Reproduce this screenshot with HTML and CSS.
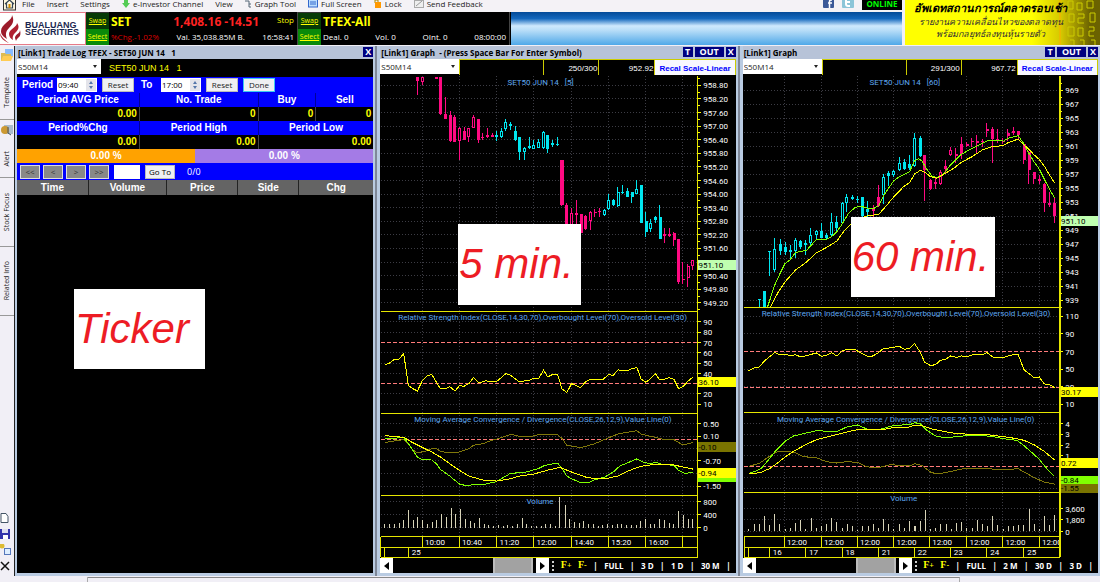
FILE: index.html
```html
<!DOCTYPE html>
<html lang="en">
<head>
    <meta charset="UTF-8">
    <meta name="viewport" content="width=device-width, initial-scale=1.0">
    <title>Bualuang Securities</title>
    <link rel="stylesheet" href="styles.css">
</head>
<body>
    <header class="top">
        <nav class="menu">
            <a href="#" class="home" aria-label="Home"><svg width="13" height="11" viewBox="0 0 13 11"><rect x="0.5" y="-3" width="12" height="13" fill="#fff8e0" stroke="#333"/><path d="M2 4 6.500 0 11 4M3.500 3v5h6V3" fill="none" stroke="#345" stroke-width="1.200"/><rect x="5.500" y="4" width="2" height="4" fill="#c80"/></svg></a>
            <a href="#">File</a>
            <a href="#">Insert</a>
            <a href="#">Settings</a>
            <a href="#"><svg width="8" height="9" viewBox="0 0 8 9"><path d="M2 0h4v3h2L4 8 0 3h2z" fill="#5c5"/></svg>e-Investor Channel</a>
            <a href="#">View</a>
            <a href="#"><svg width="7" height="9" viewBox="0 0 7 9"><path d="M0 1h4v6h2M4 4h2" fill="none" stroke="#567"/></svg>Graph Tool</a>
            <a href="#"><svg width="10" height="9" viewBox="0 0 10 9"><rect x="0.500" y="-2" width="9" height="9" fill="#bdf" stroke="#36c"/><path d="M2 2h6M2 4h6" stroke="#36c"/></svg>Full Screen</a>
            <a href="#"><svg width="8" height="9" viewBox="0 0 8 9"><path d="M1 3V0h3v3" fill="none" stroke="#a80"/><rect x="1" y="2" width="6" height="6" fill="#f90"/></svg>Lock</a>
            <a href="#"><svg width="10" height="9" viewBox="0 0 10 9"><rect x="0.500" y="0.500" width="9" height="7" fill="#eee" stroke="#aaa"/><path d="M2 6 8 1" stroke="#999"/></svg>Send Feedback</a>
            <span class="social">
                <a href="#" aria-label="Facebook"><svg width="11" height="8" viewBox="0 0 11 8"><rect y="-4" width="11" height="12" rx="1" fill="#3b5998"/><path d="M9 0H8Q6.500 0 6.500 1.500V8M5 3h4" fill="none" stroke="#fff" stroke-width="1.500"/></svg></a>
                <a href="#" aria-label="Twitter"><svg width="12" height="8" viewBox="0 0 12 8"><rect y="-4" width="12" height="12" rx="1" fill="#8cc5d8"/><path d="M4 0v4q0 2 2 2h2M4 2h4" fill="none" stroke="#fff" stroke-width="2"/></svg></a>
                <b class="online">ONLINE</b>
            </span>
        </nav>
        <div class="ticker">
            <div class="logo">
                <svg width="23" height="28" viewBox="0 0 23 28"><path d="M12 0C13 5 1 9 1 16c0 4 3 6 6 8-2-5-1-8 2-11C12 10 15 6 12 0z" fill="#9c1b2b"/><path d="M17 8c0 4-8 6-8 11 0 3 2 5 4 6-1-4 1-6 3-8 2-2 4-5 1-9z" fill="#b02030"/><path d="M20 15c0 4-5 4-5 8l1 3c1-4 6-3 4-11z" fill="#9c1b2b"/><path d="M0 18c0 5 4 8 9 10-4-3-7-5-9-10z" fill="#b02030"/></svg>
                <b>BUALUANG<br>SECURITIES</b>
            </div>
            <div class="switch"><button class="swap">Swap</button><button class="select">Select</button></div>
            <div class="quote">
                <div class="line"><b class="name">SET</b><b class="price">1,408.16 -14.51</b><span class="stop">Stop</span></div>
                <div class="line small"><span class="loss">%Chg.-1.02%</span><span>Val. 35,038.85M B.</span><span>16:58:41</span></div>
            </div>
            <div class="switch"><button class="swap">Swap</button><button class="select">Select</button></div>
            <div class="quote">
                <div class="line"><b class="name">TFEX-All</b></div>
                <div class="line small"><span>Deal. 0</span><span>Vol. 0</span><span>OInt. 0</span><span>08:00:00</span></div>
            </div>
            <div class="sky"></div>
        </div>
        <aside class="ad">
            <svg class="ad-art" width="60" height="45" viewBox="0 0 60 45"><g stroke="#cc0" fill="none"><path d="M28 1v8h5V1zM37 3v7h5V3zM47 1v7h6V1zM29 14v8h5v-8zM38 14h6v4h-6v5h6M50 13v9h5v-9zM28 27h6v9h-6zM38 28v8h5v-8zM49 27h5v4h-5v5h5M30 40h4v6M40 40h4v6M51 40h4v6"/><path d="M20 0v45" stroke="#fa0"/></g></svg>
            <p class="big">อัพเดทสถานการณ์ตลาดรอบเช้า</p>
            <p>รายงานความเคลื่อนไหวของตลาดทุน</p>
            <p>พร้อมกลยุทธ์ลงทุนหุ้นรายตัว</p>
        </aside>
    </header>

    <main class="desk">
        <nav class="side">
            <a href="#" class="tab t1"><svg width="12" height="14" viewBox="0 0 12 14"><path d="M4 1h8v8H4z" fill="#8bf"/><path d="M0 5h4l1 1h5v7H0z" fill="#db5"/><path d="M2 8h10l-2 5H0z" fill="#fc5"/></svg><span>Template</span></a>
            <a href="#" class="tab t2"><svg width="12" height="12" viewBox="0 0 12 12"><rect x="3" y="1" width="9" height="9" fill="#abc"/><circle cx="4" cy="6" r="4" fill="#c93"/><path d="M7 3v6l3 2" stroke="#456" fill="none"/></svg><span>Alert</span></a>
            <a href="#" class="tab t3"><span>Stock Focus</span></a>
            <a href="#" class="tab t4"><span>Related Info</span></a>
            <div class="side-tools">
                <button aria-label="New"><svg width="10" height="10" viewBox="0 0 10 10"><path d="M1 .5h5l2 3v6H1z" fill="#fff" stroke="#456"/></svg></button>
                <button aria-label="Save"><svg width="10" height="10" viewBox="0 0 10 10"><rect width="10" height="10" fill="#33a"/><rect x="2" width="6" height="4" fill="#dde"/><rect x="3" y="6" width="5" height="4" fill="#fff"/></svg></button>
                <button aria-label="Link"><svg width="11" height="11" viewBox="0 0 11 11"><circle cx="2" cy="2" r="2.500" fill="#db3"/><rect x="4.500" y="4.500" width="6" height="6" fill="#def" stroke="#57b"/></svg></button>
                <button aria-label="Delete"><svg width="10" height="10" viewBox="0 0 10 10"><path d="M1 1l8 8M9 1 1 9" stroke="#111" stroke-width="1.500"/></svg></button>
            </div>
        </nav>

        <section class="window log-window">
            <div class="title"><h2>[Link1] Trade Log TFEX - SET50 JUN 14&nbsp;&nbsp; 1</h2><button>X</button></div>
            <div class="symbol-row">
                <label class="combo"><select aria-label="Symbol"><option>S50M14</option></select></label>
                <span class="symbol">SET50 JUN 14&nbsp;&nbsp; 1</span>
            </div>
            <div class="period">
                <label for="from">Period</label>
                <span class="spin"><input id="from" type="text" value="09:40"><i></i></span>
                <button>Reset</button>
                <label for="to" class="to">To</label>
                <span class="spin"><input id="to" type="text" value="17:00"><i></i></span>
                <button>Reset</button>
                <button class="done">Done</button>
            </div>
            <table class="summary">
                <colgroup><col class="c34"><col class="c33"><col class="c16"><col class="c16"></colgroup>
                <tr><th>Period AVG Price</th><th>No. Trade</th><th>Buy</th><th>Sell</th></tr>
                <tr><td>0.00</td><td>0</td><td>0</td><td>0</td></tr>
                <tr><th>Period%Chg</th><th>Period High</th><th colspan="2">Period Low</th></tr>
                <tr><td>0.00</td><td>0.00</td><td colspan="2">0.00</td></tr>
            </table>
            <div class="ratio"><b class="buy">0.00 %</b><b class="sell">0.00 %</b></div>
            <div class="pager">
                <button class="nav">&lt;&lt;</button><button class="nav">&lt;</button><button class="nav">&gt;</button><button class="nav">&gt;&gt;</button>
                <input type="text" aria-label="Page"><button class="goto">Go To</button><span>0/0</span>
            </div>
            <div class="log-area">
                <table class="log">
                    <colgroup><col class="l20"><col class="l22"><col class="l20"><col class="l17"><col class="l21"></colgroup>
                    <tr><th>Time</th><th>Volume</th><th>Price</th><th>Side</th><th>Chg</th></tr>
                </table>
            </div>
            <div class="note note-ticker">Ticker</div>
        </section>

        <section class="window">
            <div class="title"><h2>[Link1] Graph&nbsp; - (Press Space Bar For Enter Symbol)</h2><button>T</button><button class="out">OUT</button><button>X</button></div>
            <div class="graph-row">
                <label class="combo"><select aria-label="Symbol"><option>S50M14</option></select></label>
                <span class="cell"></span><span class="cell">250/300</span><span class="cell">952.92</span><button>Recal Scale-Linear</button>
            </div>
            <svg class="chart" id="chart5" viewBox="6 45 1065 1449"></svg>
            <div class="scroll">
                <button class="arrow" aria-label="Scroll left"><svg width="5" height="8" viewBox="0 0 5 8"><path d="M5 0v8L0 4z"/></svg></button>
                <span class="track"><i></i></span>
                <button class="arrow" aria-label="Scroll right"><svg width="5" height="8" viewBox="0 0 5 8"><path d="M0 0v8l5-4z"/></svg></button>
                <span class="tools"><i class="grip"></i><button class="font">F<small>+</small></button><button class="font">F<small>-</small></button><em>|</em><button>FULL</button><em>|</em><button>3 D</button><em>|</em><button>1 D</button><em>|</em><button>30 M</button><em>|</em></span>
            </div>
            <div class="note note-5">5 min.</div>
        </section>

        <section class="window">
            <div class="title"><h2>[Link1] Graph</h2><button>T</button><button class="out">OUT</button><button>X</button></div>
            <div class="graph-row">
                <label class="combo"><select aria-label="Symbol"><option>S50M14</option></select></label>
                <span class="cell"></span><span class="cell">291/300</span><span class="cell">967.72</span><button>Recal Scale-Linear</button>
            </div>
            <svg class="chart" id="chart60" viewBox="9 45 1065 1449"></svg>
            <div class="scroll">
                <button class="arrow" aria-label="Scroll left"><svg width="5" height="8" viewBox="0 0 5 8"><path d="M5 0v8L0 4z"/></svg></button>
                <span class="track"><i></i></span>
                <button class="arrow" aria-label="Scroll right"><svg width="5" height="8" viewBox="0 0 5 8"><path d="M0 0v8l5-4z"/></svg></button>
                <span class="tools"><i class="grip"></i><button class="font">F<small>+</small></button><button class="font">F<small>-</small></button><em>|</em><button>FULL</button><em>|</em><button>2 M</button><em>|</em><button>30 D</button><em>|</em><button>3 D</button><em>|</em></span>
            </div>
            <div class="note note-60">60 min.</div>
        </section>
    </main>
    <footer class="status"><span></span><span class="wide"></span></footer>
    <script src="charts.js"></script>
</body>
</html>
```
FILE: styles.css
```css
* {
    box-sizing: border-box;
}
body {
    margin: 0;
    background: #f1eff6;
    font-family: "Open Sans", "Noto Sans", sans-serif;
    font-size: 9px;
    line-height: 12px;
    min-height: 100vh;
    display: flex;
    flex-direction: column;
    overflow: hidden;
}
button, input, select {
    font: inherit;
    margin: 0;
    padding: 0;
    border: 0;
    border-radius: 0;
}
a {
    color: #222;
    text-decoration: none;
}
svg {
    display: block;
}
i, em {
    font-style: normal;
}

/* header */
.top {
    display: grid;
    grid-template-columns: 1fr 195px;
    grid-template-rows: 12px 34px;
    column-gap: 3px;
}
.menu {
    display: flex;
    align-items: flex-start;
    height: 12px;
    background: #f4f2f6;
    padding-left: 3px;
}
.menu a {
    display: flex;
    gap: 3px;
    margin-right: 12px;
    font-size: 8px;
    line-height: 7px;
    white-space: nowrap;
}
.menu .home {
    margin-right: 6px;
}
.menu .social {
    display: flex;
    margin-left: auto;
}
.menu .social a {
    margin-right: 8px;
}
.online {
    width: 40px;
    height: 10px;
    line-height: 8px;
    font-size: 8px;
    background: #000;
    color: #0f0;
    text-align: center;
}
.ticker {
    display: flex;
    height: 33px;
    background: #000;
}
.logo {
    display: flex;
    align-items: center;
    gap: 2px;
    width: 86px;
    background: #fff;
    border: 1px solid #e67a88;
    border-left: 0;
    color: #1b2750;
    font-family: "Liberation Sans", Arial, sans-serif;
    font-size: 9px;
    line-height: 7px;
}
.switch {
    width: 23px;
    display: flex;
    flex-direction: column;
    border-top: 1px solid #333;
}
.switch button {
    flex: 1;
    color: #ff0;
    font-size: 7px;
    line-height: 8px;
    text-decoration: underline;
}
.swap {
    background: #063a06;
}
.select {
    background: #0a8a0a;
}
.quote {
    width: 189px;
    padding: 2px 3px 0 2px;
    border-right: 1px solid #444;
    color: #fff;
}
.line {
    display: flex;
    align-items: center;
    justify-content: space-between;
    height: 15px;
    white-space: nowrap;
}
.small {
    font-size: 8px;
    height: 16px;
}
.name {
    color: #ff0;
    font-size: 12px;
}
.price {
    color: #f22;
    font-size: 12px;
    margin-left: 24px;
}
.stop {
    color: #ff0;
    font-size: 8px;
    align-self: flex-start;
}
.loss {
    color: #d00;
}
.sky {
    flex: 1;
    margin-left: 1px;
    background: linear-gradient(#034a98, #1468bd 20%, #cfe9fd 42%, #b9def8 55%, #4fa8e8);
}
.ad {
    position: relative;
    grid-column: 2;
    grid-row: 1 / 3;
    background: linear-gradient(90deg, #ff0 65%, #d5c800 80%, #6b6200 95%);
    height: 45px;
    text-align: center;
    padding-right: 24px;
    font-style: italic;
    color: #333;
}
.ad p {
    position: relative;
    margin: 0;
    font-size: 9px;
    line-height: 12px;
    white-space: nowrap;
}
.ad .big {
    font-weight: bold;
    font-size: 11px;
    line-height: 16px;
    color: #000;
}
.ad-art {
    position: absolute;
    right: 0;
    top: 0;
}

/* workspace */
.desk {
    flex: 1;
    display: grid;
    grid-template-columns: 13px repeat(3, minmax(0, 1fr));
    column-gap: 2px;
    background: #7e8798;
}
.side {
    display: flex;
    flex-direction: column;
    background: #f1eff6;
    border-right: 1px solid #222;
    margin-right: -2px;
}
.tab {
    display: flex;
    flex-direction: column;
    align-items: center;
    gap: 4px;
    border-bottom: 1px solid #999;
    font-size: 7px;
    line-height: 10px;
}
.tab span {
    writing-mode: vertical-rl;
    transform: rotate(180deg);
    margin: auto 0;
    white-space: nowrap;
}
.t1 {
    height: 74px;
    padding-top: 2px;
}
.t2 {
    height: 58px;
    padding-top: 4px;
}
.t3, .t4 {
    height: 69px;
}
.side-tools {
    margin-top: auto;
    padding-bottom: 5px;
    display: flex;
    flex-direction: column;
    gap: 5px;
}
.side-tools button {
    background: none;
    height: 11px;
}
.window {
    position: relative;
    padding: 0 2px 3px 3px;
    background: #b9cbe2;
    min-width: 0;
    display: flex;
    flex-direction: column;
}
.log-window {
    padding-left: 2px;
}
.title {
    display: flex;
    gap: 2px;
    height: 13px;
    padding-top: 1px;
    background: #b7c3d8;
}
.title h2 {
    flex: 1;
    margin: 0;
    padding-left: 1px;
    font-size: 8px;
    line-height: 11px;
    color: #000;
    white-space: nowrap;
}
.title button {
    width: 10px;
    height: 10px;
    background: #000080;
    color: #fff;
    font-weight: bold;
    line-height: 10px;
}
.title .out {
    width: 29px;
}
.combo {
    position: relative;
    width: 84px;
    height: 15px;
    background: #fff;
}
.combo select {
    appearance: none;
    width: 100%;
    height: 15px;
    background: #fff;
    padding-left: 1px;
    color: #222;
    font-size: 8px;
}
.combo::after {
    content: "";
    position: absolute;
    right: 4px;
    top: 6px;
    border: 2px solid transparent;
    border-top: 3px solid #222;
    border-bottom: 0;
}

/* trade log */
.symbol-row {
    display: flex;
    height: 18px;
    background: #000;
}
.symbol {
    margin-left: 8px;
    color: #ff0;
    font: 9px/18px "Liberation Sans", Arial, sans-serif;
}
.period {
    display: flex;
    align-items: center;
    height: 16px;
    padding-left: 5px;
    background: #00f;
    color: #fff;
}
.period label {
    font: bold 10px/14px "Liberation Sans", Arial, sans-serif;
    width: 35px;
}
.period .to {
    width: 20px;
    margin-left: 7px;
}
.period button {
    width: 32px;
    height: 14px;
    margin-left: 5px;
    background: #efeff2;
    border: 1px solid #bbb;
    font-size: 8px;
    line-height: 10px;
    color: #222;
}
.period .done {
    border-color: #3cc8f0;
}
.spin {
    display: flex;
    width: 40px;
    height: 14px;
    background: #fff;
}
.spin input {
    width: 28px;
    font-size: 8px;
    padding-left: 1px;
}
.spin i {
    flex: 1;
    margin: 1px;
    position: relative;
    background: #e4e4ea;
}
.spin i::before, .spin i::after {
    content: "";
    position: absolute;
    left: 3px;
    top: 2px;
    border: 2px solid transparent;
    border-bottom: 3px solid #57a;
    border-top: 0;
}
.spin i::after {
    top: 7px;
    border-top: 3px solid #57a;
    border-bottom: 0;
}
table {
    width: 100%;
    table-layout: fixed;
    border-collapse: collapse;
    font: bold 10px/14px "Liberation Sans", Arial, sans-serif;
    background: #000;
}
th, td {
    padding: 0;
    height: 14px;
    border-right: 1px solid #444;
}
th:last-child, td:last-child {
    border-right: 0;
}
.summary th {
    background: #00f;
    color: #fff;
    border-color: #009;
}
.summary td {
    color: #ff0;
    text-align: right;
    padding-right: 2px;
}
.c34 { width: 34%; }
.c33 { width: 33%; }
.c16 { width: 16%; }
.ratio {
    display: flex;
    height: 14px;
    color: #fff;
    text-align: center;
    font: bold 10px/14px "Liberation Sans", Arial, sans-serif;
}
.ratio b {
    flex: 1;
}
.buy {
    background: #ffa200;
}
.sell {
    background: #a47be6;
}
.pager {
    display: flex;
    align-items: center;
    gap: 3px;
    height: 17px;
    padding-left: 3px;
    background: #00f;
    color: #fff;
}
.pager button, .pager input {
    height: 14px;
    line-height: 10px;
}
.pager .nav {
    width: 20px;
    background: #888;
    border: 1px solid #ddd;
    color: #333;
    font-size: 8px;
}
.pager input {
    width: 26px;
    background: #fff;
    margin-left: 2px;
}
.pager .goto {
    width: 30px;
    margin-left: 2px;
    font-size: 8px;
    background: #efeff2;
    border: 1px solid #bbb;
}
.pager span {
    margin-left: 9px;
}
.log-area {
    flex: 1;
    background: #000;
}
.log th {
    height: 15px;
    color: #fff;
    background: #646464;
    border-color: #222;
}
.l20 { width: 20%; }
.l22 { width: 22%; }
.l17 { width: 17%; }
.l21 { width: 21%; }

/* graph windows */
.graph-row {
    display: grid;
    grid-template-columns: 79px 84px 55px 56px 1fr;
    height: 16px;
    background: #000;
}
.graph-row .combo {
    width: auto;
}
.cell {
    border: 1px solid #cc0;
    border-right: 0;
    color: #fff;
    text-align: right;
    padding-right: 1px;
    font: 8px/17px "Liberation Sans", Arial, sans-serif;
}
.graph-row button {
    background: #f8f8ff;
    border: 1px solid #cc0;
    color: #00f;
    font: bold 8px/15px "Liberation Sans", Arial, sans-serif;
    white-space: nowrap;
}
.chart {
    width: 100%;
    height: auto;
    background: #000;
    font: 24px Roboto, "Liberation Sans", sans-serif;
}
.scroll {
    flex: 1;
    display: flex;
    min-height: 15px;
    background: #000;
}
.arrow {
    width: 13px;
    display: flex;
    align-items: center;
    justify-content: center;
    background: #fff;
}
.track {
    width: 143px;
    padding-right: 3px;
}
.track i {
    display: block;
    width: 40px;
    height: 100%;
    margin-left: auto;
    background: #a2a2a2;
    border: 2px solid #bcbcbc;
    border-width: 0 2px;
}
.tools {
    flex: 1;
    display: flex;
    align-items: center;
    justify-content: space-between;
    padding: 0 5px 0 3px;
    color: #fff;
    font-size: 8px;
    font-weight: bold;
}
.tools button {
    background: none;
    color: #fff;
}
.tools .font {
    color: #ff0;
    font: bold 10px/12px "Liberation Serif", "Times New Roman", serif;
}
.tools small {
    font-size: 8px;
}
.grip {
    height: 10px;
    border-left: 2px dotted #ccc;
}

/* callouts */
.note {
    position: absolute;
    background: #fff;
    color: #ed1c24;
    font: italic 42px/80px "Liberation Sans", Arial, sans-serif;
    padding-left: 1px;
    white-space: nowrap;
}
.note-ticker {
    left: 59px;
    top: 243px;
    width: 131px;
    height: 80px;
}
.note-5 {
    left: 81px;
    top: 178px;
    width: 123px;
    height: 81px;
}
.note-60 {
    left: 111px;
    top: 171px;
    width: 144px;
    height: 80px;
}

.status {
    display: flex;
    height: 6px;
    padding-top: 1px;
    background: #f1eff6;
}
.status span {
    width: 88px;
    border-right: 1px solid #aaa;
}
.status .wide {
    width: 872px;
    border-top: 1px solid #888;
}
```
FILE: charts.js
```javascript
// candles: [x, high, low, body top, body bottom, hollow]
const UP = '#00e6f0';
const DOWN = '#ff0a82';

const chart5 = {
    id: 'chart5', left: 8, right: 958, title: 'SET50 JUN 14\u00a0\u00a0 [5]',
    seps: [755, 1059, 1304], grid: [133, 244, 356, 467, 580, 691, 803, 914],
    price: { first: 958.8, step: 0.6, digits: 2, y: 76, dy: 40.75, count: 17, hidden: 13 },
    tags: [[598, 30, '#c0ffb0', '951.10'], [950, 30, '#ffff00', '36.10'], [1146, 30, '#7a7400', '-0.10'], [1253, 12, '#80ff00', ''], [1224, 29, '#ffff00', '-0.94']],
    up: [[350, 545], [670, 850]],
    candles: [[118,50,104,50,62],[133,50,75,50,66,1],[175,50,56,50,56],[187,52,165,52,163],[201,112,177,163,177],[217,152,245,165,243],[229,165,245,170,245],[244,200,300,203,243,1],[258,200,240,213,240],[271,203,245,205,232,1],[286,166,205,172,203,1],[300,177,250,177,240],[314,218,240,230,234],[329,205,235,224,232],[342,218,232,224,230],[356,212,242,226,230],[370,205,235,214,232,1],[383,178,213,185,208,1],[397,185,210,192,198],[411,198,242,213,240],[425,230,300,232,275],[439,260,300,265,277,1],[453,232,268,257,265],[467,240,265,254,266,1],[481,238,265,245,265,1],[496,213,268,215,265,1],[508,226,278,226,266],[524,240,262,250,256],[538,232,258,252,256],[551,300,437,300,435],[565,428,520,435,520],[580,445,520,460,520,1],[595,420,492,458,464],[609,462,520,462,520],[622,465,510,468,508],[636,453,510,457,482,1],[650,448,472,455,460],[663,443,470,452,456],[678,448,468,450,466,1],[691,402,450,420,448,1],[705,418,438,420,436],[719,380,440,395,438,1],[733,376,402,396,400],[747,385,412,393,410],[761,395,428,396,412],[775,360,403,388,402,1],[789,375,490,375,490],[803,455,530,483,515],[817,478,515,490,508,1],[831,467,490,472,480],[845,436,538,470,536],[859,503,550,523,528],[873,503,532,523,527],[887,516,557,518,540],[901,537,672,538,665],[914,605,672,655,660],[929,612,680,618,652,1],[943,598,628,600,617,1]],
    labels: [[785,'90'],[816,'80'],[847,'70'],[878,'60'],[909,'50'],[940,'40'],[1001,'20'],[1032,'10'],[1090,'0.50'],[1128,'0.10'],[1201,'-0.70'],[1277,'-1.50'],[1324,'800'],[1363,'400'],[1402,'0']],
    extra: [1165, 1239],
    dashed: [847, 971, 1138],
    lines: [
        ['#ffff00', '20,914 34,909 48,898 62,898 77,880 91,975 104,985 118,992 133,961 147,947 161,942 175,966 187,985 203,985 215,979 231,992 244,976 258,978 273,969 286,952 302,968 320,962 356,963 370,952 383,940 397,945 411,955 423,965 439,962 453,961 467,953 482,955 496,929 509,950 522,943 539,944 551,985 566,997 580,970 593,975 607,982 622,965 636,957 675,957 691,943 705,945 719,929 747,932 762,925 776,922 789,957 803,966 817,955 831,940 845,959 859,957 873,952 887,957 901,985 914,979 929,963 943,951'],
        ['#80780a', '20,1147 48,1142 77,1138 91,1150 104,1168 118,1178 147,1171 161,1165 175,1165 187,1173 215,1178 244,1175 272,1165 286,1155 314,1150 342,1140 370,1132 397,1122 425,1128 453,1130 481,1123 510,1121 538,1123 552,1135 566,1155 608,1162 650,1150 678,1138 719,1121 775,1111 790,1122 831,1131 859,1138 887,1138 914,1154 943,1147'],
        ['#80ff00', '20,1135 77,1132 91,1150 118,1190 133,1198 161,1199 175,1210 187,1227 215,1247 244,1271 265,1276 286,1273 314,1273 350,1265 370,1255 397,1239 440,1236 480,1225 500,1215 538,1208 552,1225 566,1247 580,1255 608,1267 630,1267 650,1258 680,1250 705,1235 725,1217 775,1196 800,1207 820,1210 830,1205 850,1212 887,1215 901,1230 920,1239 943,1236'],
        ['#ffff00', '20,1126 77,1131 104,1147 161,1175 187,1190 215,1210 244,1230 272,1247 314,1259 356,1262 397,1255 425,1247 467,1241 510,1229 545,1221 580,1235 622,1250 650,1255 691,1253 719,1247 750,1232 775,1222 803,1215 850,1211 887,1214 943,1226']
    ],
    volume: { x: 20, dx: 14.2, base: 1402, h: [12,10,12,14,22,52,22,32,22,12,17,22,40,32,60,40,57,25,20,15,29,10,7,5,7,5,7,5,10,29,12,5,5,5,10,10,5,91,67,25,17,14,19,12,10,5,7,12,7,10,12,9,7,7,20,27,12,10,25,22,15,10,50,37,27,26] },
    times: ['10:00', '10:40', '11:20', '12:00', '14:40', '15:20', '16:00', ''],
    days: [[20, ''], [91, '25']],
    rsiTitle: 61, macdTitle: 109, volTitle: 445
};

const chart60 = {
    id: 'chart60', left: 12, right: 959, title: 'SET50 JUN 14\u00a0\u00a0 [60]',
    seps: [742, 1057, 1297], grid: [133, 244, 352, 461, 568, 680, 788, 897],
    price: { first: 969, step: 2, digits: 0, y: 91, dy: 41.93, count: 16 },
    tags: [[468, 30, '#c0ffb0', '951.10'], [980, 31, '#ffff00', '30.17'], [1194, 30, '#ffff00', '0.72'], [1270, 27, '#7a7400', '-1.55'], [1246, 24, '#80ff00', '-0.84']],
    up: [[50, 390], [425, 545]],
    candles: [[58,715,740,715,717],[73,693,740,693,740],[88,574,648,574,576],[104,533,635,568,628,1],[120,537,583,552,573],[135,545,585,560,575],[151,555,596,571,577],[166,535,592,540,572,1],[181,540,568,542,560],[197,540,585,550,556],[211,504,560,524,550,1],[229,509,540,512,526,1],[244,490,535,513,533],[259,520,540,525,535],[274,460,532,487,525,1],[290,468,515,487,503],[306,425,490,430,488,1],[320,402,455,412,430,1],[337,405,420,411,416],[352,408,428,416,420],[368,410,470,412,468],[383,422,470,447,455],[399,435,470,447,453],[415,375,440,410,438],[430,343,432,350,405,1],[445,332,377,340,347],[461,330,350,333,345,1],[477,290,333,310,330,1],[492,297,330,307,328],[508,285,330,313,325],[523,220,322,235,318,1],[540,228,290,235,288],[553,286,423,286,330],[571,357,390,360,388],[586,355,388,365,372],[601,330,375,335,373,1],[616,300,340,317,328],[631,262,288,270,286,1],[647,265,310,282,288],[663,230,298,253,283],[680,245,262,252,257],[695,235,260,243,247],[710,225,283,242,248],[726,238,262,242,246],[740,190,232,207,213],[757,200,308,207,237],[772,207,250,238,242],[788,235,253,243,247],[803,208,243,220,228],[819,200,225,213,219],[834,212,240,213,225],[851,245,313,252,300],[866,272,372,275,330],[881,335,372,337,357],[897,345,373,358,362],[912,370,455,373,430],[928,395,440,430,435],[943,415,490,430,468]],
    labels: [[768,'110'],[821,'90'],[874,'70'],[927,'50'],[979,'30'],[1032,'10'],[1090,'4'],[1121,'3'],[1155,'2'],[1186,'1'],[1345,'3,600'],[1378,'1,800'],[1414,'0']],
    extra: [1252, 1283],
    dashed: [874, 982, 1219],
    lines: [
        ['#80ff00', '82,742 104,675 120,640 135,610 151,598 166,577 200,570 229,538 259,538 274,530 290,515 306,492 325,460 345,442 360,438 383,444 399,446 415,437 430,407 445,385 461,362 477,350 508,335 523,302 535,296 545,302 560,328 575,348 590,353 610,342 630,315 663,283 695,265 710,258 745,240 790,243 803,235 834,227 850,250 866,280 881,305 897,327 912,357 928,388 943,413'],
        ['#ffff00', '90,742 115,695 135,665 166,630 200,605 229,578 259,562 290,543 310,515 335,490 360,475 383,467 415,463 430,447 461,410 490,380 508,368 523,342 540,331 555,337 571,350 590,354 610,343 640,325 663,307 695,290 726,270 757,259 788,257 803,248 834,237 850,253 866,268 881,284 897,298 912,318 928,345 943,369'],
        ['#ffff00', '26,932 42,923 58,920 73,902 88,890 104,877 120,884 135,881 151,887 166,883 181,890 197,887 229,878 244,888 259,885 274,877 290,887 306,872 320,867 345,868 360,877 383,889 399,887 415,877 430,865 450,863 477,858 492,867 508,865 523,850 540,875 553,905 571,916 586,913 601,900 616,897 631,887 650,892 663,887 680,889 695,884 726,884 740,877 757,890 788,893 803,887 819,883 834,883 851,928 866,940 881,952 897,950 912,971 928,973 943,982'],
        ['#80780a', '26,1218 58,1209 88,1188 110,1175 135,1172 166,1177 190,1189 229,1192 259,1204 290,1208 320,1204 352,1206 380,1219 410,1223 450,1213 508,1217 523,1210 545,1215 571,1235 590,1241 615,1237 663,1226 710,1223 788,1228 834,1225 866,1243 881,1252 912,1265 943,1271'],
        ['#80ff00', '26,1240 45,1233 65,1223 88,1195 104,1175 135,1143 160,1127 190,1120 229,1111 290,1114 320,1100 352,1094 380,1106 415,1108 435,1103 461,1095 510,1093 523,1087 540,1090 560,1110 586,1127 615,1132 650,1129 680,1126 740,1127 765,1130 788,1135 830,1140 850,1155 881,1182 897,1197 920,1225 943,1248'],
        ['#ffff00', '26,1240 60,1237 88,1225 110,1210 135,1190 160,1173 197,1153 229,1138 274,1127 320,1115 352,1108 430,1108 461,1101 500,1102 523,1095 545,1096 571,1105 610,1113 650,1120 700,1122 740,1123 790,1129 830,1135 851,1140 881,1153 912,1173 943,1199']
    ],
    volume: { x: 26, dx: 15.55, base: 1413, h: [8,21,23,45,18,51,21,6,11,26,33,8,39,11,16,21,39,28,11,23,15,3,15,15,23,10,37,23,6,23,11,30,16,31,65,8,10,21,23,8,26,28,10,11,35,23,15,45,18,8,15,15,18,18,66,23,6,45,18,48] },
    times: ['12:00', '12:00', '12:00', '12:00', '12:00', '12:00', '12:00', '12:00'],
    days: [[26, ''], [88, '16'], [197, '17'], [306, '18'], [415, '21'], [523, '22'], [631, '23'], [740, '24'], [851, '25']],
    rsiTitle: 65, macdTitle: 111, volTitle: 450
};

function drawChart(c) {
    const svg = document.getElementById(c.id);

    function add(name, attrs, text) {
        const node = document.createElementNS('http://www.w3.org/2000/svg', name);
        for (const key in attrs) node.setAttribute(key, attrs[key]);
        if (text) node.textContent = text;
        svg.appendChild(node);
    }
    function path(d, stroke, width, dash) {
        add('path', { d: d, stroke: stroke, 'stroke-width': width || 3, 'stroke-dasharray': dash || 'none', fill: 'none', 'shape-rendering': 'crispEdges' });
    }
    function rect(x, y, w, h, fill) {
        add('rect', { x: x, y: y, width: w, height: h, fill: fill, 'shape-rendering': 'crispEdges' });
    }
    function text(x, y, value, fill) {
        if (value) add('text', { x: x, y: y + 9, fill: fill || '#ffffff' }, value);
    }

    // grid and scale labels
    const rows = c.labels.slice();
    for (let i = 0; i < c.price.count; i++) {
        const label = i === c.price.hidden ? '' : (c.price.first - i * c.price.step).toFixed(c.price.digits);
        rows.push([c.price.y + i * c.price.dy, label]);
    }
    rows.forEach(r => {
        path(`M${c.left} ${r[0]}H${c.right}`, '#3c3c44', 3, '3 6');
        path(`M${c.right} ${r[0]}h10`, '#ffff00');
        text(975, r[0], r[1]);
    });
    c.extra.forEach(y => path(`M${c.left} ${y}H${c.right}`, '#3c3c44', 3, '3 6'));
    c.grid.forEach(x => path(`M${x} 48V1429`, '#3c3c44', 3, '3 6'));
    for (let y = c.price.y - c.price.dy / 2; y < c.seps[0]; y += c.price.dy / 2) {
        path(`M${c.right} ${y}h7`, '#ffff00');
    }
    c.dashed.forEach(y => path(`M${c.left} ${y}H${c.right}`, '#ff7a7a', 3, '12 6'));

    // candles
    c.candles.forEach(k => {
        const color = c.up.some(r => k[0] >= r[0] && k[0] <= r[1]) ? UP : DOWN;
        path(`M${k[0]} ${k[1]}V${k[2]}`, color);
        rect(k[0] - 4, k[3], 9, Math.max(k[4] - k[3], 3), color);
        if (k[5]) rect(k[0] - 1, k[3] + 3, 3, k[4] - k[3] - 6, '#000000');
    });

    c.lines.forEach(l => add('polyline', { points: l[1], stroke: l[0], 'stroke-width': 3, fill: 'none', 'shape-rendering': 'crispEdges' }));

    c.volume.h.forEach((h, i) => rect(Math.round(c.volume.x + i * c.volume.dx) - 1, c.volume.base - h, 3, h, '#d8d4b8'));

    // frame, time row and day row
    c.seps.concat([1429, 1460, 1491]).forEach(y => path(`M${c.left} ${y}H${c.right}`, '#e6e600'));
    path(`M${c.left} 1429V1491`, '#e6e600');
    c.grid.forEach((x, i) => {
        path(`M${x} 1429V1460`, '#e6e600');
        text(x + 8, 1444, c.times[i]);
    });
    c.days.forEach(d => {
        path(`M${d[0]} 1460V1491`, '#e6e600');
        text(d[0] + 10, 1476, d[1]);
    });

    // the scale column hides whatever runs past the plot
    rect(c.right + 2, 1429, 120, 64, '#000000');
    path(`M${c.right} 48V1491`, '#e6e600', 4);
    c.tags.forEach(t => {
        rect(c.right + 2, t[0], 120, t[1], t[2]);
        text(c.right + 3, t[0] + t[1] / 2, t[3], '#000000');
    });

    text(388, 65, c.title, '#5fa8f0');
    text(c.rsiTitle, c.seps[0] + 16, 'Relative Strength Index(CLOSE,14,30,70),Overbought Level(70),Oversold Level(30)', '#5fa8f0');
    text(c.macdTitle, c.seps[1] + 18, 'Moving Average Convergence / Divergence(CLOSE,26,12,9),Value Line(0)', '#5fa8f0');
    text(c.volTitle, c.seps[2] + 17, 'Volume', '#5fa8f0');
}

drawChart(chart5);
drawChart(chart60);
```
